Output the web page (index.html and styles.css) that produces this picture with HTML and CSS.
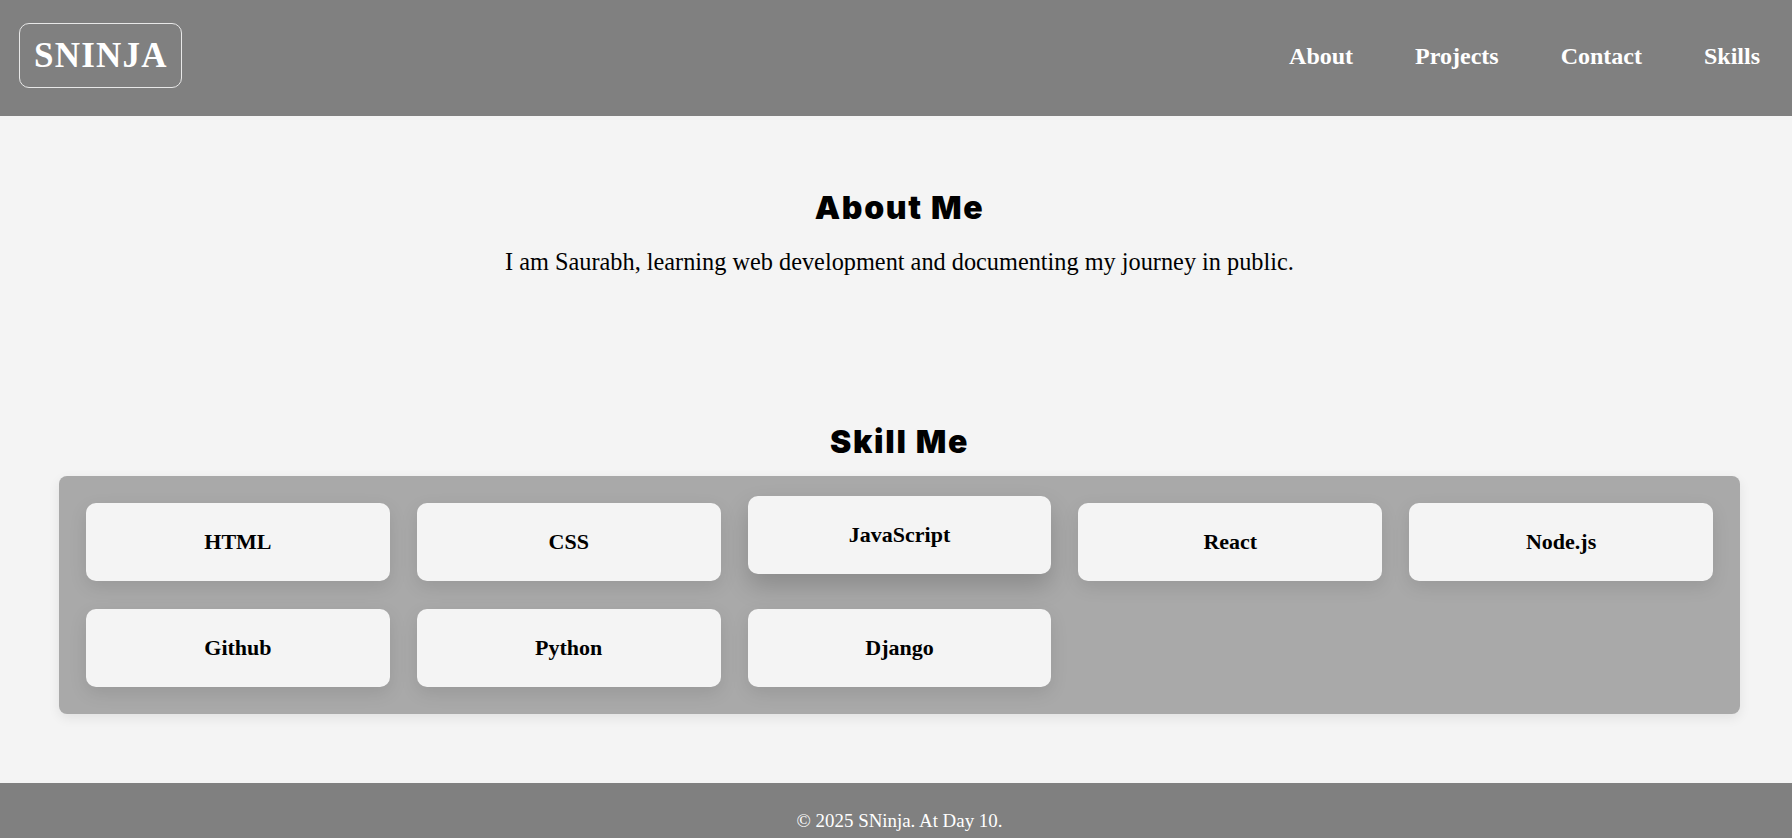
FILE: index.html
```html
<!DOCTYPE html>
<html lang="en">
<head>
<meta charset="utf-8">
<title>SNinja</title>
<link rel="stylesheet" href="styles.css">
</head>
<body>
<header class="site-header">
  <div class="logo">SNINJA</div>
  <nav class="nav">
    <a href="#about">About</a>
    <a href="#projects">Projects</a>
    <a href="#contact">Contact</a>
    <a href="#skills">Skills</a>
  </nav>
</header>
<main class="main">
  <section class="about" id="about">
    <h2 class="section-title">About Me</h2>
    <p class="about-text">I am Saurabh, learning web development and documenting my journey in public.</p>
  </section>
  <section class="skills" id="skills">
    <h2 class="section-title">Skill Me</h2>
    <div class="skill-grid">
      <div class="skill-card">HTML</div>
      <div class="skill-card">CSS</div>
      <div class="skill-card skill-card--hover">JavaScript</div>
      <div class="skill-card">React</div>
      <div class="skill-card">Node.js</div>
      <div class="skill-card">Github</div>
      <div class="skill-card">Python</div>
      <div class="skill-card">Django</div>
    </div>
  </section>
</main>
<footer class="site-footer">
  <p class="footer-text">&copy; 2025 SNinja. At Day 10.</p>
</footer>
</body>
</html>
```

FILE: styles.css
```css
* { box-sizing: border-box; }

html, body {
  margin: 0;
  padding: 0;
}

body {
  background: #f4f4f4;
  font-family: "Liberation Serif", "Times New Roman", serif;
  color: #000;
}

.site-header {
  height: 116px;
  background: #808080;
  display: flex;
  align-items: center;
  justify-content: space-between;
  padding: 0 32px 0 19px;
}

.logo {
  color: #fff;
  font-weight: bold;
  font-size: 35px;
  letter-spacing: 1.2px;
  line-height: 38px;
  border: 1px solid #e8e8e8;
  border-radius: 10px;
  padding: 13px 13px 12px 14px;
  margin-top: -5px;
}

.nav {
  display: flex;
  gap: 62px;
  margin-top: -5px;
}

.nav a {
  color: #fff;
  text-decoration: none;
  font-weight: bold;
  font-size: 24px;
  line-height: 28px;
}

.main {
  padding: 0 52px 0 59px;
}

.about {
  padding-top: 73px;
  text-align: center;
}

.section-title {
  margin: 0;
  font-family: "Inter", "Liberation Sans", sans-serif;
  font-weight: 900;
  font-size: 32px;
  line-height: 37px;
  letter-spacing: 1.7px;
  text-align: center;
}

.about-text {
  margin: 22px 0 0;
  font-size: 24.3px;
  line-height: 28px;
}

.skills {
  padding-top: 147px;
}

.skill-grid {
  margin-top: 16px;
  background: #a9a9a9;
  border-radius: 8px;
  padding: 27px;
  display: grid;
  grid-template-columns: repeat(5, 1fr);
  column-gap: 27px;
  row-gap: 27.5px;
  box-shadow: 0 4px 12px rgba(0, 0, 0, 0.08);
}

.skill-card {
  height: 78px;
  background: #f4f4f4;
  border-radius: 10px;
  display: flex;
  align-items: center;
  justify-content: center;
  font-weight: bold;
  font-size: 22px;
  box-shadow: 0 6px 18px rgba(0, 0, 0, 0.1);
}

.skill-card--hover {
  transform: translateY(-7px);
  box-shadow: 0 12px 24px rgba(0, 0, 0, 0.18);
}

.site-footer {
  margin-top: 69px;
  background: #808080;
  padding: 27px 0 20px 7px;
  text-align: center;
}

.footer-text {
  margin: 0;
  color: #fff;
  font-size: 18.9px;
  line-height: 22px;
}
```
